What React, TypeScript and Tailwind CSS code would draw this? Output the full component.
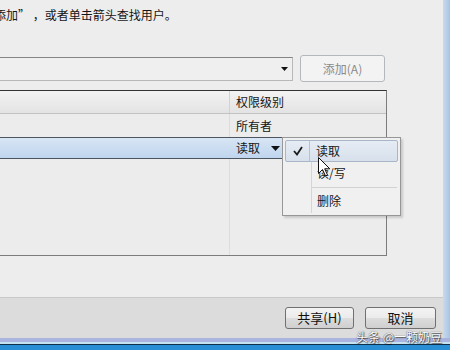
import React from "react";

const font = { fontFamily: '"Noto Sans CJK SC", "Noto Sans", sans-serif' };

function Arrow({ w = 7, h = 4 }: { w?: number; h?: number }) {
  return (
    <svg width={w} height={h} viewBox={`0 0 ${w} ${h}`}>
      <polygon points={`0,0 ${w},0 ${w / 2},${h}`} fill="#111" />
    </svg>
  );
}

function WinButton({ label, disabled }: { label: string; disabled?: boolean }) {
  return (
    <div
      className={
        disabled
          ? "flex items-center justify-center rounded-[3px] border border-[#b4b8bb] bg-[#f3f3f3] text-[12px] text-[#8a8a8a]"
          : "flex items-center justify-center rounded-[3px] border border-[#707070] bg-[linear-gradient(#f3f3f3,#ebebeb_50%,#dddddd_51%,#cfcfcf)] text-[13px] text-[#111]"
      }
      style={{ width: "100%", height: "100%" }}
    >
      {label}
    </div>
  );
}

export default function App() {
  return (
    <div className="relative w-[450px] h-[350px] overflow-hidden bg-[#ededed] flex flex-col" style={font}>
      <div className="flex flex-1">
        <div className="w-[443px] flex flex-col">
          <div className="h-[55px] pt-[7px] flex overflow-hidden text-[12px] leading-[16px] text-[#161616] whitespace-nowrap">
            <span className="-ml-[6px]">添加”&nbsp;，或者单击箭头查找用户。</span>
          </div>

          <div className="flex h-[28px] items-start gap-[7px]">
            <div className="mt-[2px] w-[293px] h-[24px] border border-l-0 border-[#b8b8b8] border-t-[#858585] bg-[#efefef] flex items-center justify-end pr-[4px]">
              <Arrow />
            </div>
            <div className="w-[85px] h-[27px]">
              <WinButton label="添加(A)" disabled />
            </div>
          </div>

          <div className="mt-[7px] w-[387px] h-[166px] border border-l-0 border-[#7c7c7c] border-t-[#333] flex flex-col bg-[#ececec] text-[12px] text-[#161616]">
            <div className="h-[23px] flex border-b border-[#c2c2c2] bg-[linear-gradient(#f3f3f3,#e3e3e3)]">
              <div className="w-[230px] border-r border-[#d2d2d2]" />
              <div className="pl-[6px] flex items-center">权限级别</div>
            </div>
            <div className="h-[23px] flex">
              <div className="w-[230px] border-r border-[#dcdcdc]" />
              <div className="pl-[6px] flex items-center">所有者</div>
            </div>
            <div className="h-[22px] flex border-y border-[#4d5560] bg-[linear-gradient(#d8e5f4,#bfd5ee)]">
              <div className="w-[230px]" />
              <div className="pl-[6px] flex items-center gap-[11px]">
                读取
                <Arrow w={9} h={5} />
              </div>
            </div>
            <div className="flex-1 flex">
              <div className="w-[230px] border-r border-[#dedede]" />
            </div>
          </div>

          <div className="flex-1" />

          <div className="h-[41px] border-t border-[#c8c8c8] bg-[#dcdcdc] flex justify-end gap-[11px] pr-[7px] pt-[9px]">
            <div className="w-[69px] h-[22px]">
              <WinButton label="共享(H)" />
            </div>
            <div className="w-[71px] h-[22px]">
              <WinButton label="取消" />
            </div>
          </div>
        </div>
        <div className="w-[7px] bg-[linear-gradient(90deg,#c8dbee,#a9c3e0)]" />
      </div>

      <div className="h-[12px] flex flex-col">
        <div className="h-[4px] bg-[#aab4de]" />
        <div className="h-[2px] bg-[#c6e2f0]" />
        <div className="h-[1px] bg-[#12304c]" />
        <div className="flex-1 bg-[#2a8ed4]" />
      </div>

      {/* context menu */}
      <div className="absolute left-[282px] top-[137px] w-[119px] h-[79px] border border-[#979797] bg-[#f0f0f0] p-[2px] shadow-[2px_2px_2px_rgba(0,0,0,0.15)] text-[12px] text-[#161616]">
        <div className="absolute left-[28px] top-[2px] bottom-[2px] w-[1px] bg-[#d6d6d6]" />
        <div className="relative h-[22px] flex rounded-[2px] border border-[#a9b6c8] bg-[linear-gradient(#e6ecf4,#d7e0eb)]">
          <div className="w-[24px] border-r border-[#b6c2d2] flex items-center justify-center">
            <svg width="10" height="10" viewBox="0 0 10 10">
              <path d="M1 5 L4 8.5 L9 1" fill="none" stroke="#1a1a1a" strokeWidth="1.8" />
            </svg>
          </div>
          <div className="pl-[6px] flex items-center">读取</div>
        </div>
        <div className="relative h-[22px] flex items-center pl-[32px]">读/写</div>
        <div className="relative ml-[27px] mr-[1px] my-[3px] h-[1px] bg-[#d2d2d2]" />
        <div className="relative h-[20px] flex items-center pl-[32px]">删除</div>
      </div>

      {/* mouse cursor */}
      <svg className="absolute left-[318px] top-[157px]" width="13" height="21" viewBox="0 0 13 21">
        <path d="M0.5 0.5 L0.5 16.5 L4.5 12.5 L7.5 19 L9.5 18 L6.7 11.8 L11.8 11.8 Z" fill="#fff" stroke="#111" strokeWidth="1" />
      </svg>

      {/* watermark */}
      <div className="absolute left-[356px] top-[330px] text-[12px] leading-[14px] text-white [text-shadow:0_0_1px_#222,1px_1px_1px_rgba(0,0,0,0.6)] whitespace-nowrap">
        头条 @一颗奶豆
      </div>
    </div>
  );
}
